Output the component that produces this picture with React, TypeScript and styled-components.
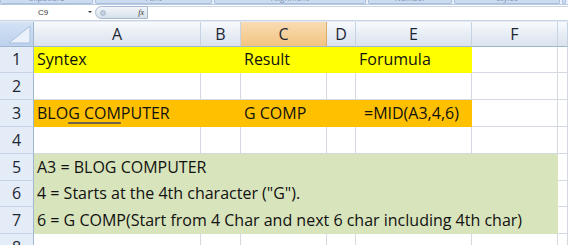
import styled, { createGlobalStyle } from "styled-components";

const GlobalStyle = createGlobalStyle`
  html, body {
    margin: 0;
    padding: 0;
    background: #ffffff;
  }
  body {
    width: 568px;
    height: 245px;
    overflow: hidden;
    font-family: "Open Sans", "Liberation Sans", sans-serif;
  }
`;

const GRID = "#d5dae2";
const HEAD_LINE = "#9eb6ce";

const columns = [
  { key: "A", width: 167 },
  { key: "B", width: 40 },
  { key: "C", width: 86, selected: true },
  { key: "D", width: 29 },
  { key: "E", width: 116 },
  { key: "F", width: 86 },
  { key: "", width: 0 },
];

const rowHeights = [26, 27, 27, 27, 27, 26, 27, 27];

const ribbonGroups = [
  { label: "Clipboard", width: 95 },
  { label: "Font", width: 119 },
  { label: "Alignment", width: 154 },
  { label: "Number", width: 86 },
  { label: "Styles", width: 108 },
  { label: "", width: 6 },
];

const YELLOW = "#ffff00";
const ORANGE = "#ffc000";
const GREEN = "#d8e4bc";

const Page = styled.div`
  width: 568px;
  height: 245px;
  display: flex;
  flex-direction: column;
  overflow: hidden;
`;

const Ribbon = styled.div`
  height: 4px;
  flex: 0 0 4px;
  display: flex;
  gap: 2px;
  background: #e9f0f9;
  overflow: hidden;
  border-bottom: 1px solid #b7cae2;
`;

const RibbonGroup = styled.div<{ w: number }>`
  flex: 0 0 ${(p) => p.w - 2}px;
  height: 4px;
  background: #cbdcf1;
  border: 1px solid #a8c0de;
  border-top: none;
  border-radius: 0 0 2px 2px;
  box-sizing: border-box;
  font-size: 8px;
  line-height: 8px;
  color: #7c93b3;
  text-align: center;
  overflow: hidden;
`;

const RibbonLabel = styled.div`
  margin-top: -6px;
`;

const FormulaBar = styled.div`
  height: 15px;
  flex: 0 0 15px;
  display: flex;
  align-items: stretch;
  background: #ffffff;
  border-bottom: 1px solid #c9d5e5;
`;

const NameBox = styled.div`
  width: 86px;
  display: flex;
  align-items: center;
  justify-content: center;
  font-family: "Liberation Sans", Arial, sans-serif;
  font-size: 8px;
  color: #3a3a3a;
`;

const DropArrow = styled.div`
  width: 0;
  height: 0;
  margin: 6px 3px 0 2px;
  border-left: 2px solid transparent;
  border-right: 2px solid transparent;
  border-top: 2px solid #333;
`;

const FxPill = styled.div`
  width: 53px;
  margin: 1px 0;
  display: flex;
  align-items: center;
  justify-content: space-between;
  padding: 0 3px 0 4px;
  box-sizing: border-box;
  border: 1px solid #a8b9cf;
  border-radius: 7px 0 0 7px;
  background: linear-gradient(#f3f6fa, #d6e0ec);
`;

const FxText = styled.span`
  font-family: "Liberation Serif", "Times New Roman", serif;
  font-style: italic;
  font-size: 8px;
  color: #333;
`;

const FormulaInput = styled.div`
  flex: 1;
  border-top: 1px solid #c9d5e5;
  margin-top: 1px;
`;

const Spacer = styled.div`
  height: 1px;
  flex: 0 0 1px;
  background: #e3eaf4;
`;

const Sheet = styled.div`
  display: grid;
  flex: 0 0 auto;
  grid-template-columns: 34px ${columns
    .slice(0, 6)
    .map((c) => `${c.width}px`)
    .join(" ")} 1fr;
  grid-template-rows: 25px ${rowHeights.map((h) => `${h}px`).join(" ")};
`;

const Corner = styled.div`
  background: linear-gradient(#d4e2f4, #bcd1ec);
  border-right: 1px solid ${HEAD_LINE};
  border-bottom: 1px solid ${HEAD_LINE};
  display: flex;
  align-items: flex-end;
  justify-content: flex-end;
  padding: 0 2px 2px 0;
`;

const ColHead = styled.div<{ selected?: boolean }>`
  display: flex;
  align-items: center;
  justify-content: center;
  font-size: 16px;
  color: #1c2733;
  background: ${(p) =>
    p.selected
      ? "linear-gradient(#f9dcb4, #f2c481)"
      : "linear-gradient(#f8fafd, #e6ecf4 55%, #dbe3ee)"};
  border-right: 1px solid ${(p) => (p.selected ? "#d9ae6c" : "#c6d3e3")};
  border-bottom: 1px solid ${HEAD_LINE};
`;

const RowHead = styled.div`
  display: flex;
  align-items: flex-end;
  justify-content: center;
  padding-bottom: 2px;
  box-sizing: border-box;
  font-size: 16px;
  line-height: 22px;
  color: #1c2733;
  background: #e4ecf7;
  border-right: 1px solid ${HEAD_LINE};
  border-bottom: 1px solid #c5d3e4;
`;

const Cell = styled.div<{ fill?: string; span?: number; indent?: number }>`
  grid-column: span ${(p) => p.span ?? 1};
  display: flex;
  align-items: flex-end;
  padding: 0 0 2px ${(p) => p.indent ?? 3}px;
  box-sizing: border-box;
  white-space: nowrap;
  font-size: 16px;
  line-height: 22px;
  color: #111111;
  background: ${(p) => p.fill ?? "#ffffff"};
  border-right: 1px solid ${(p) => p.fill ?? GRID};
  border-bottom: 1px solid ${(p) => p.fill ?? GRID};
`;

const Marked = styled.span`
  text-decoration: underline;
  text-decoration-color: #6f6246;
  text-decoration-thickness: 1.5px;
  text-underline-offset: 3px;
`;

const CornerMark = () => (
  <svg width="22" height="18" viewBox="0 0 22 18">
    <polygon points="21,0 21,17 0,17" fill="#eaf1fa" stroke="#a9c0dc" />
  </svg>
);

const notes = [
  "A3 = BLOG COMPUTER",
  '4 = Starts at the 4th character ("G").',
  "6 = G COMP(Start from 4 Char and next 6 char including 4th char)",
];

const Empty = ({ n }: { n: number }) => (
  <>
    {Array.from({ length: n }).map((_, i) => (
      <Cell key={i} />
    ))}
  </>
);

export default function App() {
  return (
    <Page>
      <GlobalStyle />
      <Ribbon>
        {ribbonGroups.map((g) => (
          <RibbonGroup key={g.label + g.width} w={g.width}>
            <RibbonLabel>{g.label}</RibbonLabel>
          </RibbonGroup>
        ))}
      </Ribbon>
      <FormulaBar>
        <NameBox>C9</NameBox>
        <DropArrow />
        <FxPill>
          <svg width="6" height="6" viewBox="0 0 6 6">
            <circle cx="3" cy="3" r="2.4" fill="#c9d4e2" stroke="#98a9bf" strokeWidth="0.8" />
          </svg>
          <FxText>fx</FxText>
        </FxPill>
        <FormulaInput />
      </FormulaBar>
      <Spacer />
      <Sheet>
        <Corner>
          <CornerMark />
        </Corner>
        {columns.map((c) => (
          <ColHead key={c.key || "G"} selected={c.selected}>
            {c.key}
          </ColHead>
        ))}

        <RowHead>1</RowHead>
        <Cell fill={YELLOW}>Syntex</Cell>
        <Cell fill={YELLOW} />
        <Cell fill={YELLOW}>Result</Cell>
        <Cell fill={YELLOW} />
        <Cell fill={YELLOW}>Forumula</Cell>
        <Empty n={2} />

        <RowHead>2</RowHead>
        <Empty n={7} />

        <RowHead>3</RowHead>
        <Cell fill={ORANGE}>
          <span>
            BLO<Marked>G COM</Marked>PUTER
          </span>
        </Cell>
        <Cell fill={ORANGE} />
        <Cell fill={ORANGE}>G COMP</Cell>
        <Cell fill={ORANGE} />
        <Cell fill={ORANGE} indent={8}>
          =MID(A3,4,6)
        </Cell>
        <Empty n={2} />

        <RowHead>4</RowHead>
        <Empty n={7} />

        {notes.map((text, i) => (
          <>
            <RowHead key={`h${i}`}>{i + 5}</RowHead>
            <Cell key={`n${i}`} fill={GREEN} span={6}>
              {text}
            </Cell>
            <Cell key={`g${i}`} />
          </>
        ))}

        <RowHead>8</RowHead>
        <Empty n={7} />
      </Sheet>
    </Page>
  );
}
